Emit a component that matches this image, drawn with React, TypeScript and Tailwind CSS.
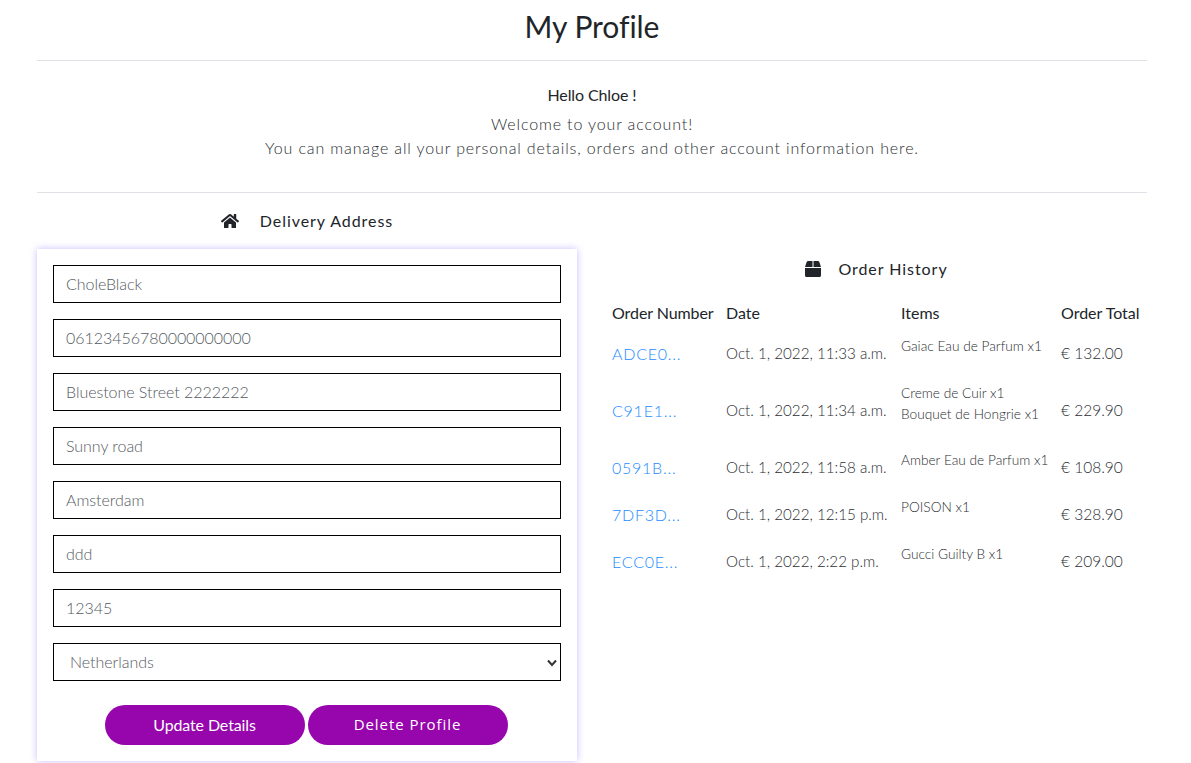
import React from "react";

const inputs = ["CholeBlack","06123456780000000000","Bluestone Street 2222222","Sunny road","Amsterdam","ddd","12345"];
const rows = [
  { n: "ADCE0...", d: "Oct. 1, 2022, 11:33 a.m.", i: ["Gaiac Eau de Parfum x1"], t: "€ 132.00", h: "h-[47px]" },
  { n: "C91E1...", d: "Oct. 1, 2022, 11:34 a.m.", i: ["Creme de Cuir x1","Bouquet de Hongrie x1"], t: "€ 229.90", h: "h-[67px]" },
  { n: "0591B...", d: "Oct. 1, 2022, 11:58 a.m.", i: ["Amber Eau de Parfum x1"], t: "€ 108.90", h: "h-[47px]" },
  { n: "7DF3D...", d: "Oct. 1, 2022, 12:15 p.m.", i: ["POISON x1"], t: "€ 328.90", h: "h-[47px]" },
  { n: "ECC0E...", d: "Oct. 1, 2022, 2:22 p.m.", i: ["Gucci Guilty B x1"], t: "€ 209.00", h: "h-[47px]" },
];

export default function App() {
  return (
    <div className="w-[1191px] h-[763px] overflow-hidden bg-white text-[#212529] font-['Lato',sans-serif] font-light">
      <div className="mx-[37px] w-[1110px]">
        <h1 className="h-[61px] border-b border-[#dee2e6] text-center text-[30px] font-normal leading-[53px] tracking-[-0.05px]">My Profile</h1>
        <div className="h-[132px] border-b border-[#dee2e6] pt-[22px] text-center">
          <p className="text-[16px] font-normal leading-[24px] tracking-[-0.1px]">Hello Chloe !</p>
          <p className="mt-[5px] text-[16px] leading-[24px] tracking-[0.87px] text-[#2a2e32]">Welcome to your account!<br />You can manage all your personal details, orders and other account information here.</p>
        </div>
        <div className="flex">
          <div className="w-[540px]">
            <div className="flex h-[56px] items-center justify-center gap-[21px] text-[16px] font-normal tracking-[0.95px]">
              <svg width="18" height="16" viewBox="0 0 576 512" fill="#212529"><path d="M280.4 148.3 96 300.1V464a16 16 0 0 0 16 16l112.1-.3a16 16 0 0 0 15.9-16V368a16 16 0 0 1 16-16h64a16 16 0 0 1 16 16v95.6a16 16 0 0 0 16 16.1L464 480a16 16 0 0 0 16-16V300L295.7 148.3a12.2 12.2 0 0 0-15.3 0zM571.6 251.5 488 182.6V44.1a12 12 0 0 0-12-12h-56a12 12 0 0 0-12 12v72.6L318.5 43a48 48 0 0 0-61 0L4.3 251.5a12 12 0 0 0-1.6 16.9l25.5 31A12 12 0 0 0 45.2 301l235.2-193.7a12.2 12.2 0 0 1 15.3 0L530.9 301a12 12 0 0 0 16.9-1.6l25.5-31a12 12 0 0 0-1.7-16.9z"/></svg>
              <span>Delivery Address</span>
            </div>
            <div className="h-[512px] w-[540px] shadow-[0_0_7px_rgba(110,90,255,0.4)] px-[16px] pt-[16px]">
              <div className="flex flex-col gap-[16px]">
                {inputs.map((v) => (
                  <div key={v} className="flex h-[38px] items-center border border-black px-3 text-[16px] tracking-[-0.04px] text-[#555b62]">{v}</div>
                ))}
                <div className="relative flex h-[38px] items-center border border-black pl-4 text-[16px] tracking-[-0.04px] text-[#555b62]">
                  Netherlands
                  <svg className="absolute right-[3px] top-[15px]" width="10" height="8" viewBox="0 0 10 8"><path d="M1 1.5 5 6l4-4.5" fill="none" stroke="#333" strokeWidth="2"/></svg>
                </div>
              </div>
              <div className="mt-[24px] flex justify-center gap-[3px] pr-[2px]">
                <button className="h-[40px] w-[200px] rounded-[20px] bg-[#9606ac] text-[16px] font-normal tracking-[-0.12px] text-white">Update Details</button>
                <button className="h-[40px] w-[200px] rounded-[20px] bg-[#9606ac] pb-px font-['Open_Sans',sans-serif] text-[15px] font-normal tracking-[0.95px] text-white">Delete Profile</button>
              </div>
            </div>
          </div>
          <div className="ml-[30px] flex-1">
            <div className="mt-[48px] flex h-[56px] items-center justify-center gap-[17px] pr-[1px] text-[16px] font-normal tracking-[0.95px]">
              <svg width="16" height="16" viewBox="0 0 512 512" fill="#212529"><path d="M509.5 184.6 458.9 32.8C452.4 13.2 434.1 0 413.4 0H272v192h238.7c-.4-2.5-.4-5-1.2-7.4zM240 0H98.6c-20.7 0-39 13.2-45.5 32.8L2.5 184.6c-.8 2.4-.8 4.9-1.2 7.4H240V0zM0 224v240c0 26.5 21.5 48 48 48h416c26.5 0 48-21.5 48-48V224H0z"/></svg>
              <span>Order History</span>
            </div>
            <div className="flex h-[32px] items-center text-[16px] font-normal">
              <span className="ml-[5px] w-[114px] tracking-[-0.08px]">Order Number</span>
              <span className="w-[175px]">Date</span>
              <span className="w-[160px]">Items</span>
              <span>Order Total</span>
            </div>
            {rows.map((r) => (
              <div key={r.n} className={`flex items-center ${r.h}`}>
                <span className="ml-[5px] w-[114px] pt-[2px] text-[16px] tracking-[0.75px] text-[#1e8cff]">{r.n}</span>
                <span className="w-[175px] pt-[2px] text-[15.2px] text-[#2a2e32]">{r.d}</span>
                <div className="w-[160px] -translate-y-[7px] text-[13.7px] leading-[21px] text-[#2a2e32]">{r.i.map((x) => <div key={x}>{x}</div>)}</div>
                <span className="pt-[2px] text-[15.5px] text-[#2a2e32]">{r.t}</span>
              </div>
            ))}
          </div>
        </div>
      </div>
    </div>
  );
}
